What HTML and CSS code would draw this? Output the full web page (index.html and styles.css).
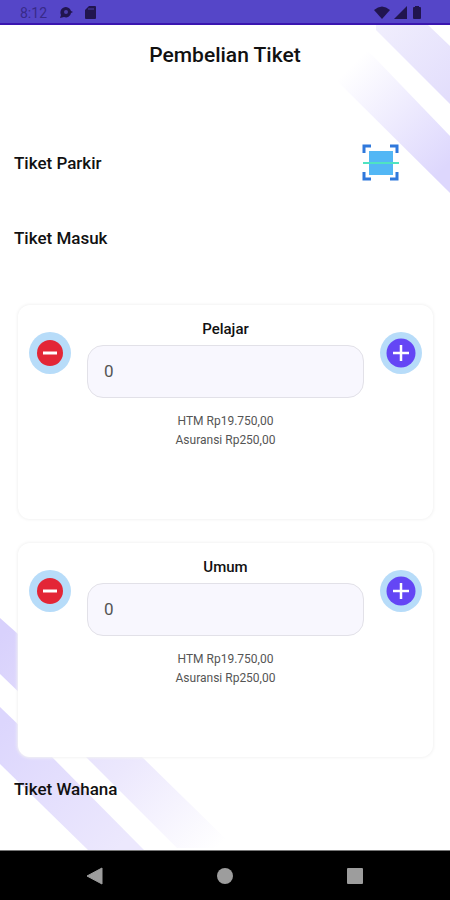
FILE: index.html
```html
<!DOCTYPE html>
<html lang="id">
<head>
<meta charset="utf-8">
<meta name="viewport" content="width=device-width, initial-scale=1">
<title>Pembelian Tiket</title>
<link rel="stylesheet" href="styles.css">
</head>
<body>
<header class="status-bar">
  <div class="status-group status-left">
    <span class="clock">8:12</span>
    <svg width="14" height="14" viewBox="0 0 14 14" aria-hidden="true"><path d="M7 1a6 5.500 0 0 1 5 4l2 1-2 1A5 5 0 0 1 5 11l-4 1 1-3A5.500 5.500 0 0 1 7 1Z" fill="#21154f"/><circle cx="7" cy="6" r="2" fill="#4c3ea8"/></svg>
    <svg width="12" height="14" viewBox="0 0 12 14" aria-hidden="true"><path d="M4 0h6q1 0 1 1v11q0 1-1 1H1q-1 0-1-1V4Z" fill="#21154f"/><path d="M4 2v2M6 2v2M8 2v2" stroke="#4c3ea8"/></svg>
  </div>
  <div class="status-group status-right">
    <svg width="16" height="14" viewBox="0 0 16 14" aria-hidden="true"><path d="M0 4Q8-3 16 4L8 13Z" fill="#21154f"/></svg>
    <svg width="14" height="14" viewBox="0 0 14 14" aria-hidden="true"><path d="M13 0v13H0Z" fill="#21154f"/></svg>
    <svg width="10" height="14" viewBox="0 0 10 14" aria-hidden="true"><path d="M3 0h4v1h1q1 0 1 1v10q0 1-1 1H2q-1 0-1-1V2q0-1 1-1h1Z" fill="#21154f"/></svg>
  </div>
</header>

<main class="screen">
  <svg class="decor decor-top" width="120" height="170" viewBox="0 0 120 170" aria-hidden="true">
    <defs>
      <linearGradient id="top-a" gradientUnits="userSpaceOnUse" x1="40" y1="0" x2="120" y2="80"><stop offset="0" stop-color="#f1effd"/><stop offset="1" stop-color="#e2ddfc"/></linearGradient>
      <linearGradient id="top-b" gradientUnits="userSpaceOnUse" x1="22" y1="40" x2="120" y2="138"><stop offset="0" stop-color="#fff"/><stop offset="1" stop-color="#ddd7fd"/></linearGradient>
    </defs>
    <path d="M46 0H98L120 21V79L46 5Z" fill="url(#top-a)"/>
    <path d="M20 10L45 33L120 111V168L0 49Z" fill="url(#top-b)"/>
  </svg>
  <svg class="decor decor-bottom" width="250" height="234" viewBox="0 0 250 234" aria-hidden="true">
    <defs>
      <linearGradient id="bot-a" gradientUnits="userSpaceOnUse" x1="0" y1="20" x2="215" y2="235"><stop offset="0" stop-color="#d8d1fc"/><stop offset=".6" stop-color="#ece8fd"/><stop offset="1" stop-color="#fff"/></linearGradient>
      <linearGradient id="bot-b" gradientUnits="userSpaceOnUse" x1="0" y1="110" x2="120" y2="230"><stop offset="0" stop-color="#dcd6fd"/><stop offset="1" stop-color="#ece8fd"/></linearGradient>
    </defs>
    <path d="M0 2L18 18L140 139L235 232H177L84 139L0 58Z" fill="url(#bot-a)"/>
    <path d="M0 91L50 139L144 234H88L0 148Z" fill="url(#bot-b)"/>
  </svg>

  <h1 class="page-title">Pembelian Tiket</h1>

  <div class="parking">
    <h2 class="section-title">Tiket Parkir</h2>
    <button class="scan" type="button" aria-label="Pindai tiket">
      <svg width="38" height="38" viewBox="0 0 38 38" aria-hidden="true">
        <path d="M7 7h24v24H7Z" fill="#53b7f5"/>
        <path d="M2 9V2h7M28 2h7v7M35 28v7h-7M9 35H2v-7" fill="none" stroke="#2f78dc" stroke-width="3"/>
        <path d="M1 19h36" stroke="#4fe3c1" stroke-width="2"/>
      </svg>
    </button>
  </div>

  <h2 class="section-title entry-title">Tiket Masuk</h2>

  <div class="cards">
    <section class="card">
      <button class="round minus" type="button" aria-label="Kurangi Pelajar">
        <svg width="42" height="42" viewBox="0 0 42 42" aria-hidden="true"><circle cx="21" cy="21" r="21" fill="#b7dcf9"/><circle cx="21" cy="21" r="13" fill="#e32636"/><path d="M14 21h14" stroke="#fff" stroke-width="3"/></svg>
      </button>
      <div class="fields">
        <label class="card-title" for="pelajar">Pelajar</label>
        <input class="count" id="pelajar" type="text" inputmode="numeric" value="0">
        <p class="price">HTM Rp19.750,00<br>Asuransi Rp250,00</p>
      </div>
      <button class="round plus" type="button" aria-label="Tambah Pelajar">
        <svg width="42" height="42" viewBox="0 0 42 42" aria-hidden="true"><circle cx="21" cy="21" r="21" fill="#b7dcf9"/><circle cx="21" cy="21" r="14.500" fill="#6446f5"/><path d="M13 21h16M21 13v16" stroke="#fff" stroke-width="2.500"/></svg>
      </button>
    </section>
    <section class="card">
      <button class="round minus" type="button" aria-label="Kurangi Umum">
        <svg width="42" height="42" viewBox="0 0 42 42" aria-hidden="true"><circle cx="21" cy="21" r="21" fill="#b7dcf9"/><circle cx="21" cy="21" r="13" fill="#e32636"/><path d="M14 21h14" stroke="#fff" stroke-width="3"/></svg>
      </button>
      <div class="fields">
        <label class="card-title" for="umum">Umum</label>
        <input class="count" id="umum" type="text" inputmode="numeric" value="0">
        <p class="price">HTM Rp19.750,00<br>Asuransi Rp250,00</p>
      </div>
      <button class="round plus" type="button" aria-label="Tambah Umum">
        <svg width="42" height="42" viewBox="0 0 42 42" aria-hidden="true"><circle cx="21" cy="21" r="21" fill="#b7dcf9"/><circle cx="21" cy="21" r="14.500" fill="#6446f5"/><path d="M13 21h16M21 13v16" stroke="#fff" stroke-width="2.500"/></svg>
      </button>
    </section>
  </div>

  <h2 class="section-title ride-title">Tiket Wahana</h2>
</main>

<nav class="nav-bar" aria-label="Navigasi sistem">
  <button type="button" aria-label="Kembali"><svg width="18" height="18" viewBox="0 0 18 18" aria-hidden="true"><path d="M1 9L16 1V17Z" fill="#9d9d9d" stroke="#9d9d9d" stroke-linejoin="round"/></svg></button>
  <button type="button" aria-label="Beranda"><svg width="18" height="18" viewBox="0 0 18 18" aria-hidden="true"><circle cx="9" cy="9" r="8" fill="#9d9d9d"/></svg></button>
  <button type="button" aria-label="Terbaru"><svg width="18" height="18" viewBox="0 0 18 18" aria-hidden="true"><rect x="1" y="1" width="16" height="16" rx="1" fill="#9d9d9d"/></svg></button>
</nav>
</body>
</html>
```

FILE: styles.css
```css
* {
  box-sizing: border-box;
}

body {
  margin: 0;
  min-height: 100vh;
  display: flex;
  flex-direction: column;
  font-family: Roboto, sans-serif;
  color: #111;
  background: #fff;
}

h1,
h2,
p {
  margin: 0;
}

button {
  padding: 0;
  border: 0;
  background: none;
  cursor: pointer;
}

svg {
  display: block;
}

.status-bar {
  height: 25px;
  padding: 2px 28px 0 20px;
  display: flex;
  justify-content: space-between;
  align-items: center;
  background: #5546c8;
  border-bottom: 2px solid #3a16b0;
}

.status-group {
  display: flex;
  align-items: center;
}

.status-left {
  gap: 12px;
}

.status-right {
  gap: 4px;
}

.clock {
  font-size: 14px;
  line-height: 16px;
  color: #382a88;
}

.screen {
  position: relative;
  z-index: 0;
  flex: 1;
  padding: 16px 14px 0;
}

.decor {
  position: absolute;
  z-index: -1;
}

.decor-top {
  top: 0;
  right: 0;
}

.decor-bottom {
  bottom: 0;
  left: 0;
}

.page-title {
  font-size: 21px;
  line-height: 28px;
  font-weight: 500;
  text-align: center;
}

.parking {
  margin-top: 75px;
  padding-right: 36px;
  display: flex;
  justify-content: space-between;
  align-items: center;
}

.section-title {
  font-size: 17px;
  line-height: 24px;
  font-weight: 500;
}

.entry-title {
  margin-top: 44px;
}

.ride-title {
  margin: 20px 0;
}

.cards {
  margin: 55px 3px 0 4px;
  display: grid;
  gap: 24px;
}

.card {
  min-height: 214px;
  padding: 14px 11px;
  display: flex;
  justify-content: space-between;
  align-items: flex-start;
  gap: 16px;
  background: #fff;
  border-radius: 12px;
  box-shadow: 0 0 3px 1px #f3f3f3;
}

.round {
  flex: none;
  margin-top: 13px;
}

.fields {
  flex: 1;
  display: flex;
  flex-direction: column;
  align-items: center;
}

.card-title {
  font-size: 15px;
  line-height: 20px;
  font-weight: 500;
}

.count {
  width: 100%;
  height: 53px;
  margin-top: 6px;
  padding: 0 16px 2px;
  font: 17px/20px Roboto, sans-serif;
  color: #555;
  background: #f8f7fe;
  border: 1px solid #e2e1e8;
  border-radius: 16px;
}

.price {
  margin-top: 14px;
  font-size: 12px;
  line-height: 19px;
  text-align: center;
  color: #555;
}

.nav-bar {
  height: 50px;
  padding: 0 30px;
  display: grid;
  grid-template-columns: repeat(3, 1fr);
  background: #000;
  border-top: 1px solid #777;
}

.nav-bar button {
  display: grid;
  place-items: center;
}
```
